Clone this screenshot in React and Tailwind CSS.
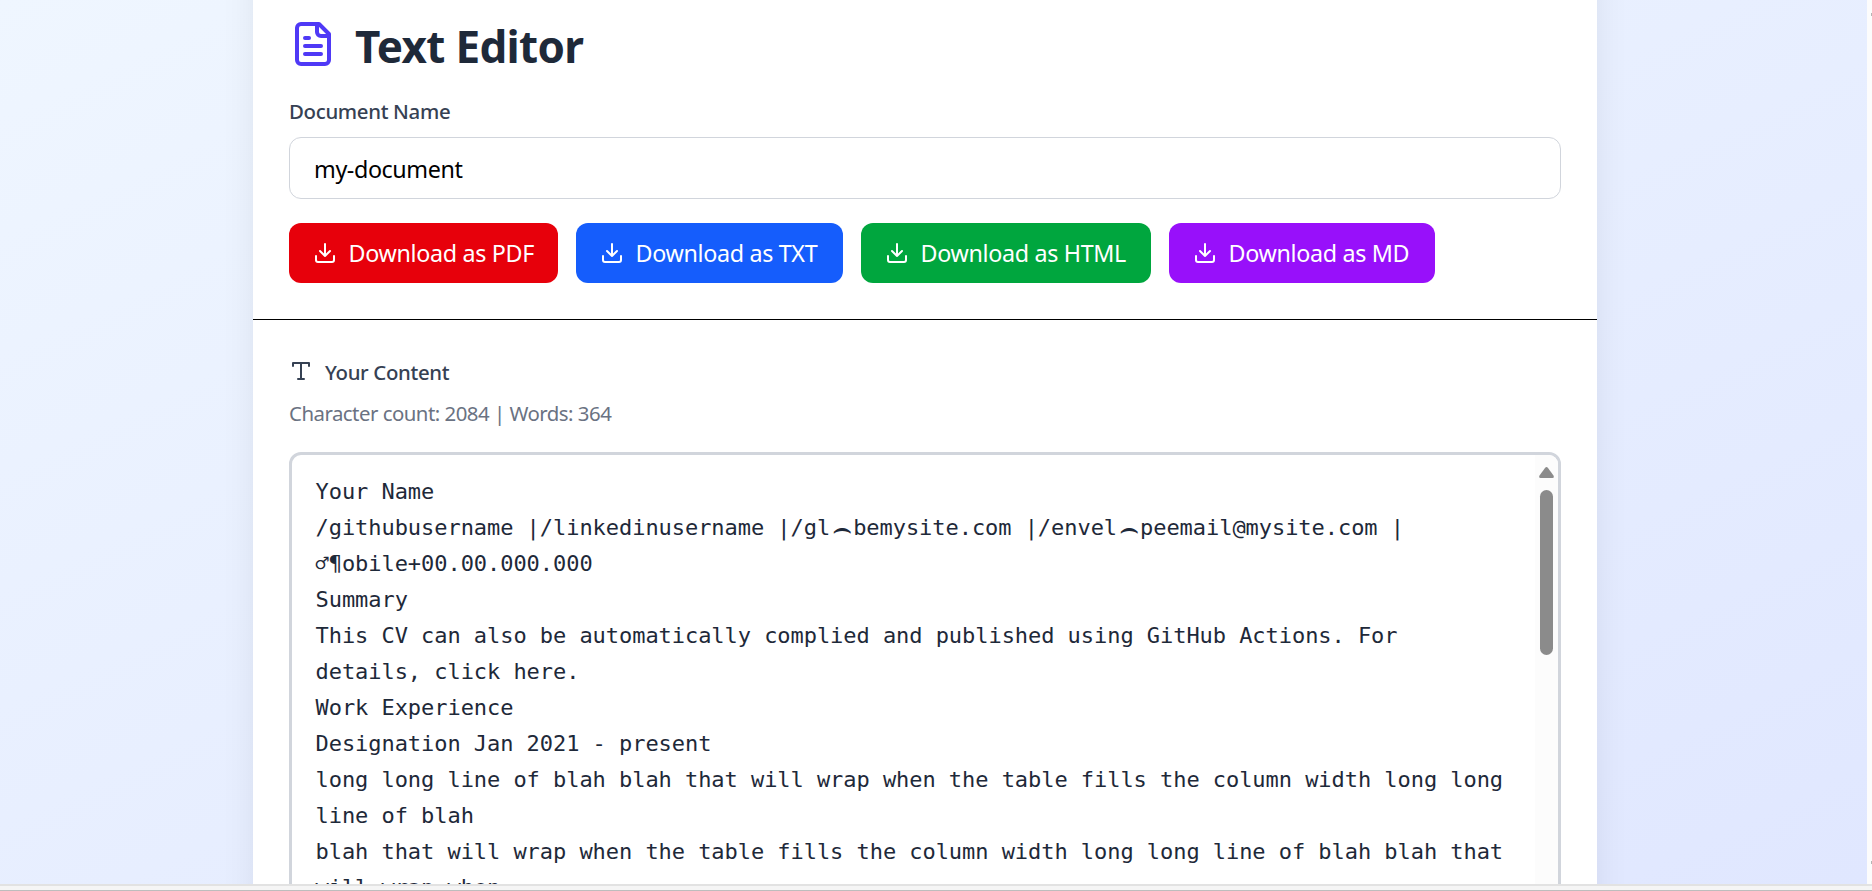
import React from "react";

const buttons = [
  { label: "Download as PDF", box: "w-[269px] bg-[#e7000b]" },
  { label: "Download as TXT", box: "w-[267px] bg-[#155dfc]" },
  { label: "Download as HTML", box: "w-[290px] bg-[#00a63e]" },
  { label: "Download as MD", box: "w-[266px] bg-[#9810fa]" },
];

function FileIcon() {
  return (
    <svg className="h-[48px] w-[48px] shrink-0 text-[#4f39f6]" viewBox="0 0 24 24" fill="none" stroke="currentColor" strokeWidth="2" strokeLinecap="round" strokeLinejoin="round">
      <path d="M15 2H6a2 2 0 0 0-2 2v16a2 2 0 0 0 2 2h12a2 2 0 0 0 2-2V7Z" />
      <path d="M14 2v4a2 2 0 0 0 2 2h4" />
      <path d="M10 9H8M16 13H8M16 17H8" />
    </svg>
  );
}

function DownloadIcon() {
  return (
    <svg className="h-6 w-6 shrink-0" viewBox="0 0 24 24" fill="none" stroke="currentColor" strokeWidth="2" strokeLinecap="round" strokeLinejoin="round">
      <path d="M21 15v4a2 2 0 0 1-2 2H5a2 2 0 0 1-2-2v-4" />
      <path d="m7 10 5 5 5-5M12 15V3" />
    </svg>
  );
}

function TypeIcon() {
  return (
    <svg className="h-6 w-6 shrink-0" viewBox="0 0 24 24" fill="none" stroke="currentColor" strokeWidth="2" strokeLinecap="round" strokeLinejoin="round">
      <path d="M4 7V4h16v3M9 20h6M12 4v16" />
    </svg>
  );
}

function Arc() {
  return (
    <span className="inline-flex h-9 w-[23px] justify-center align-top font-['DejaVu_Sans'] text-[31px] leading-9 tracking-normal">
      <span>⌢</span>
    </span>
  );
}

const lines = [
  "Your Name",
  <>/githubusername |/linkedinusername |/gl<Arc />bemysite.com |/envel<Arc />peemail@mysite.com |</>,
  "♂¶obile+00.00.000.000",
  "Summary",
  "This CV can also be automatically complied and published using GitHub Actions. For",
  "details, click here.",
  "Work Experience",
  "Designation Jan 2021 - present",
  "long long line of blah blah that will wrap when the table fills the column width long long",
  "line of blah",
  "blah that will wrap when the table fills the column width long long line of blah blah that",
  "will wrap when",
];

export default function App() {
  return (
    <div className="flex h-[891px] w-full flex-col overflow-hidden font-['Noto_Sans',sans-serif]">
      <div className="flex h-[884px] shrink-0 overflow-hidden">
        <div className="flex h-[884px] w-[1867px] justify-center bg-linear-to-br from-[#eff6ff] to-[#e0e7ff] pr-[17px]">
          <main className="-mt-[100px] h-[1100px] w-[1344px] bg-white shadow-[0_30px_37px_-7px_rgba(0,0,0,0.1)]">
            <header className="h-[420px] border-b border-black px-9 pt-[120px]">
              <div className="flex h-12 items-center gap-[18px]">
                <FileIcon />
                <h1 className="pt-1 text-[44px] leading-[54px] font-bold tracking-[-0.65px] text-[#1e2939]">Text Editor</h1>
              </div>
              <label htmlFor="name" className="mt-[28px] block text-[20.4px] leading-[30px] font-medium tracking-[-0.33px] text-[#364153]">Document Name</label>
              <input
                id="name"
                defaultValue="my-document"
                className="mt-[11px] block h-[62px] w-full rounded-xl border border-[#d1d5dc] bg-white px-6 pt-px text-[23.3px] tracking-[-0.4px] text-black"
              />
              <div className="mt-6 flex gap-[18px]">
                {buttons.map((b) => (
                  <button key={b.label} className={`flex h-[60px] items-center gap-[11.5px] rounded-xl pl-6 text-[23.3px] tracking-[-0.33px] whitespace-nowrap text-white ${b.box}`}>
                    <DownloadIcon />
                    <span className="pt-px">{b.label}</span>
                  </button>
                ))}
              </div>
            </header>
            <section className="px-9 pt-[36px]">
              <div className="flex h-[30px] items-center gap-3 text-[#364153]">
                <TypeIcon />
                <h2 className="pt-0.5 text-[20.4px] leading-[30px] font-medium tracking-[-0.35px]">Your Content</h2>
              </div>
              <p className="mt-[12px] mb-6 text-[20.4px] leading-[30px] tracking-[-0.51px] text-[#6a7282]">Character count: 2084 | Words: 364</p>
              <div className="flex h-[600px] justify-between overflow-hidden rounded-xl border-[3px] border-[#d1d5dc]">
                <div className="pt-[18.5px] pl-[23.5px] font-['DejaVu_Sans_Mono',monospace] text-[22px] leading-9 tracking-[-0.05px] whitespace-pre text-[#1e2939]">
                  {lines.map((line, i) => (
                    <div key={i} className="h-9">{line}</div>
                  ))}
                </div>
                <div className="flex w-[23px] flex-col items-center bg-[#fcfcfc] pt-3">
                  <svg className="h-[11px] w-[15px]" viewBox="0 0 15 11" fill="#8b8b8b">
                    <path d="M6 1Q7.500-1 9 1L14.500 8.500Q15.500 11 13.500 11H1.500Q-.5 11 .5 8.500Z" />
                  </svg>
                  <div className="mt-3 h-[165px] w-[13px] rounded-full bg-[#8b8b8b]" />
                </div>
              </div>
            </section>
          </main>
        </div>
        <div className="flex w-[5px] flex-col items-end justify-between bg-[#fcfcfc] pt-[13px] pb-[20px]">
          <div className="h-[3px] w-px bg-[#b5b5b5]" />
          <div className="h-[3px] w-px bg-[#b5b5b5]" />
        </div>
      </div>
      <div className="h-[7px] border-t-2 border-b border-t-[#e2e2e2] border-b-[#bdbdbd] bg-[#f5f5f5]" />
    </div>
  );
}
